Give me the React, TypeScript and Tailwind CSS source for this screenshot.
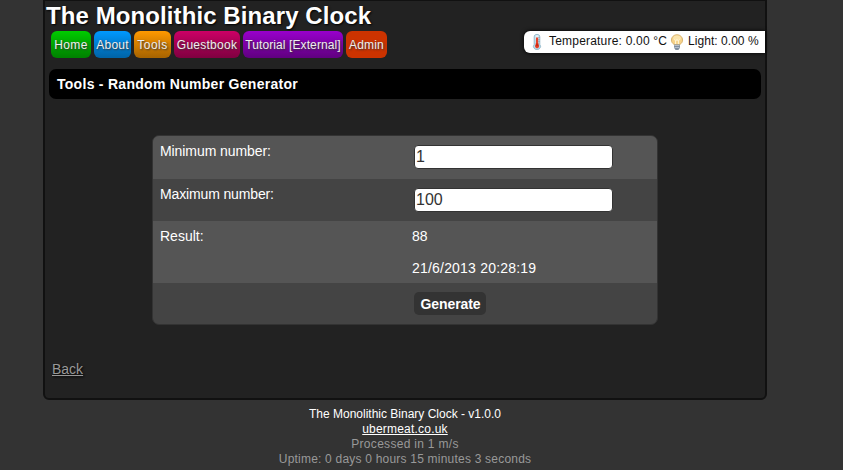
import React from "react";

const navItems = [
  { label: "Home", style: "w-[40px] bg-linear-to-b from-[#00cc00] to-[#008000] tracking-[0.4px]" },
  { label: "About", style: "w-[37px] bg-linear-to-b from-[#0099ff] to-[#0063a6] tracking-[0.2px]" },
  { label: "Tools", style: "w-[37px] bg-linear-to-b from-[#ff9900] to-[#a66300] tracking-[0.45px]" },
  { label: "Guestbook", style: "w-[66px] bg-linear-to-b from-[#cc0066] to-[#800040] tracking-[0.25px]" },
  { label: "Tutorial [External]", style: "w-[100px] bg-linear-to-b from-[#9900cc] to-[#600080] tracking-[0.1px]" },
  { label: "Admin", style: "w-[41px] bg-[#cc3300] tracking-[0.15px]" },
];

function Thermometer() {
  return (
    <svg className="ml-[5px] h-4 w-4 shrink-0" viewBox="0 0 16 16">
      <path d="M5.2 2.8a2.8 2.4 0 0 1 5.6 0v7.6a3.5 3.3 0 1 1-5.6 0z" fill="#bfdcea" stroke="#8fb4c6" strokeWidth="0.9" />
      <path d="M8 1.2v4" stroke="#e4f3fa" strokeWidth="3" />
      <path d="M7 3.5h2.2v7a2 2 0 1 1-2.2 0z" fill="#e8432a" />
      <path d="M6.7 9.5h2.8v2.8H6.7z" fill="#cf2a12" />
      <path d="M9.5 3.5h1M9.5 5.5h1M9.5 7.5h1" stroke="#6d8c9b" strokeWidth=".7" />
    </svg>
  );
}

function Bulb() {
  return (
    <svg className="mx-[2px] h-4 w-4 shrink-0" viewBox="0 0 16 16">
      <path d="M5.2 10.6C3.2 9.2 2.4 7.8 2.4 6a5.6 5.3 0 0 1 11.2 0c0 1.8-.8 3.2-2.8 4.6z" fill="#f6d288" stroke="#d6b06b" strokeWidth=".9" />
      <ellipse cx="8" cy="4.2" rx="3.8" ry="2.7" fill="#fbe5ae" />
      <path d="m5.4 5.5 1.3 1.2L8 5.5l1.3 1.2 1.3-1.2M6.6 6.6v3.4M9.4 6.6v3.4" fill="none" stroke="#fff6d8" strokeWidth="1" />
      <path d="M5 10.5h6v3.2L9.4 16H6.6L5 13.7z" fill="#8290a0" />
      <path d="M5.4 11.5h5M5.4 13.5h5" stroke="#c3ccd6" strokeWidth=".8" />
    </svg>
  );
}

export default function App() {
  return (
    <div className="h-[470px] w-full overflow-hidden bg-[#333] font-['Liberation_Sans',Arial,sans-serif] text-[14px] text-white">
      <div className="ml-[43px] h-[400px] w-[724px] rounded-b-[6px] border-x-2 border-t border-b-2 border-[#111] bg-[#222]">
        <h1 className="ml-[1px] h-[30px] text-[24px] leading-[30px] font-bold tracking-[0.09px] whitespace-nowrap [text-shadow:1px_1px_2px_#000]">The Monolithic Binary Clock</h1>
        <div className="flex h-[27px] justify-between pl-[6px]">
          <nav className="flex gap-[3px]">
            {navItems.map((item) => (
              <a key={item.label} className={`flex h-[27px] items-center justify-center rounded-[6px] text-[12px] whitespace-nowrap text-[#eee] [text-shadow:1px_1px_2px_#333] ${item.style}`}>{item.label}</a>
            ))}
          </nav>
          <div className="flex h-[22px] w-[241px] items-center rounded-l-[6px] bg-white text-[12px] leading-[20px] whitespace-nowrap text-[#111] shadow-[0_0_4px_#000]">
            <Thermometer />
            <span className="ml-[4px] h-[22px] w-[118px] tracking-[0.2px]">Temperature: 0.00 °C</span>
            <Bulb />
            <span className="ml-[1px] h-[22px] tracking-[0.05px]">Light: 0.00 %</span>
          </div>
        </div>
        <h2 className="mt-[11px] ml-[4px] h-[30px] w-[712px] rounded-[7px] bg-black pl-[8px] leading-[30px] font-bold tracking-[0.28px]">Tools - Random Number Generator</h2>
        <form className="mt-[36px] ml-[107px] h-[190px] w-[506px] overflow-hidden rounded-[7px] border border-[#333] bg-[#444]">
          <div className="flex h-[43px] bg-[#555] pt-[9px] pl-[7px]">
            <label className="w-[254px] leading-[12px] tracking-[-0.08px]">Minimum number:</label>
            <input className="h-[24px] w-[199px] rounded-[4px] border border-[#333] bg-white px-[1px] text-[16px] text-[#333]" defaultValue="1" />
          </div>
          <div className="flex h-[42px] pt-[9px] pl-[7px]">
            <label className="w-[254px] leading-[12px] tracking-[-0.14px]">Maximum number:</label>
            <input className="h-[24px] w-[199px] rounded-[4px] border border-[#333] bg-white px-[1px] text-[16px] text-[#333]" defaultValue="100" />
          </div>
          <div className="flex h-[62px] bg-[#555] pt-[7px] pl-[7px] leading-[16px]">
            <span className="w-[252px]">Result:</span>
            <div><p>88</p><p className="mt-[16px] tracking-[0.2px]">21/6/2013 20:28:19</p></div>
          </div>
          <div className="h-[41px] pt-[9px] pl-[261px]">
            <button type="button" className="block h-[23px] w-[72px] rounded-[5px] bg-[#333] pl-px leading-[25px] font-bold tracking-[-0.1px]">Generate</button>
          </div>
        </form>
        <a className="mt-[36px] ml-[7px] block w-fit leading-[16px] text-[#999] underline [text-shadow:1px_1px_2px_#000]">Back</a>
      </div>
      <footer className="ml-[43px] w-[724px] pt-[7px] text-center text-[12px] leading-[15px] text-[#999]">
        <p className="text-white">The Monolithic Binary Clock - v1.0.0</p>
        <p className="tracking-[0.2px] text-white underline">ubermeat.co.uk</p>
        <p className="tracking-[0.3px]">Processed in 1 m/s</p>
        <p className="tracking-[0.21px]">Uptime: 0 days 0 hours 15 minutes 3 seconds</p>
      </footer>
    </div>
  );
}
